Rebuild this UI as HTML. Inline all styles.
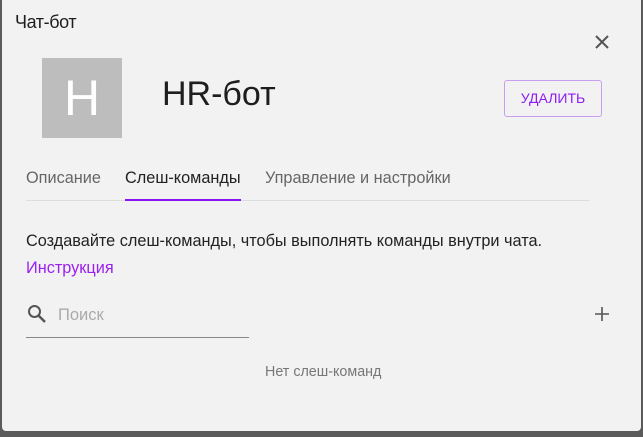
<!DOCTYPE html>
<html><head><meta charset="utf-8"><style>
body{margin:0;width:643px;height:437px;background:#5b5b5b;font-family:"Liberation Sans",sans-serif;position:relative;overflow:hidden}
.d{position:absolute;left:2px;top:-4px;width:639px;height:435px;background:#f2f2f2;border-radius:4px}
.a{position:absolute;white-space:nowrap}
</style></head><body>
<div class="d"></div>
<div class="a" style="left:15px;top:12px;font-size:18px;letter-spacing:-0.4px;color:#1e1e1e">Чат-бот</div>
<svg class="a" style="left:594px;top:34px" width="16" height="16"><path d="M2 2L14 14M14 2L2 14" stroke="#555" stroke-width="2"/></svg>
<div class="a" style="left:42px;top:58px;width:80px;height:80px;background:#bdbdbd;color:#fff;font-size:50px;line-height:80px;text-align:center">H</div>
<div class="a" style="left:162px;top:75px;font-size:34px;color:#1e1e1e">HR-бот</div>
<div class="a" style="left:504px;top:80px;width:96px;height:35px;border:1px solid #c89ef2;border-radius:3px;color:#8e1cf0;font-size:14px;line-height:35px;text-align:center">УДАЛИТЬ</div>
<div class="a" style="left:26px;top:169px;font-size:16.3px;color:#666">Описание</div>
<div class="a" style="left:125px;top:169px;font-size:16.3px;color:#222">Слеш-команды</div>
<div class="a" style="left:265px;top:169px;font-size:16.3px;color:#666">Управление и настройки</div>
<div class="a" style="left:26px;top:200px;width:563px;height:1px;background:#ddd"></div>
<div class="a" style="left:125px;top:199px;width:116px;height:2px;background:#8a14f5"></div>
<div class="a" style="left:26px;top:232px;font-size:16.3px;color:#222">Создавайте слеш-команды, чтобы выполнять команды внутри чата.</div>
<div class="a" style="left:26px;top:259px;font-size:16.3px;color:#9b1ff0">Инструкция</div>
<svg class="a" style="left:27px;top:304px" width="20" height="20"><circle cx="7.5" cy="7.5" r="5.5" fill="none" stroke="#555" stroke-width="2"/><path d="M11.5 11.5L18 18" stroke="#555" stroke-width="2.5"/></svg>
<div class="a" style="left:58px;top:306px;font-size:16.5px;color:#aaa">Поиск</div>
<div class="a" style="left:26px;top:337px;width:223px;height:1px;background:#888"></div>
<svg class="a" style="left:594px;top:306px" width="16" height="16"><path d="M8 1V15M1 8H15" stroke="#555" stroke-width="1.6"/></svg>
<div class="a" style="left:265px;top:364px;font-size:14.3px;color:#777">Нет слеш-команд</div>
</body></html>
